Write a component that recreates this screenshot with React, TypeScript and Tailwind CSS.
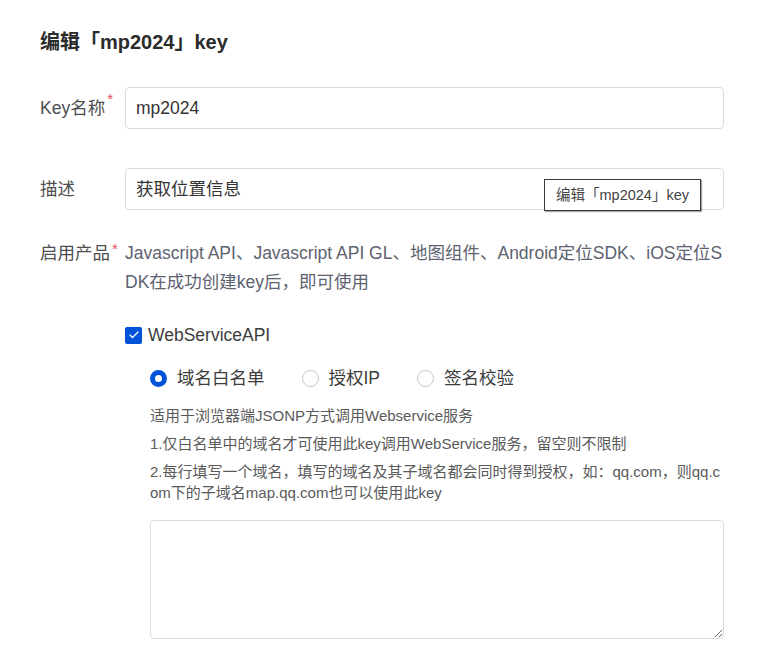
import { Check } from "lucide-react";

const font = { fontFamily: '"Liberation Sans", "Noto Sans CJK SC", sans-serif' };

function Star() {
  return <span className="ml-[2px] self-start text-[15px] leading-none text-[#e34d59] -mt-[4px]">*</span>;
}

function Radio({ checked, label }: { checked?: boolean; label: string }) {
  return (
    <label className="flex items-center gap-[10px]">
      {checked ? (
        <span className="h-[17px] w-[17px] rounded-full border-[5px] border-[#0052d9] bg-white" />
      ) : (
        <span className="h-[17px] w-[17px] rounded-full border border-[#c5c5c5] bg-white" />
      )}
      <span className="text-[17.5px] leading-6 text-[#3c3c3c]">{label}</span>
    </label>
  );
}

export default function App() {
  return (
    <div className="min-h-screen bg-white pl-[40px] pr-[41px] pt-[30px]" style={font}>
      <h2 className="text-[20px] font-bold leading-6 text-[#2b2b2b]">编辑「mp2024」key</h2>

      {/* Key名称 */}
      <div className="mt-[33px] flex items-center">
        <div className="flex w-[85px] items-center text-[17.5px] text-[#4e4e4e]">
          <span>Key名称</span>
          <Star />
        </div>
        <div className="flex h-[42px] flex-1 items-center rounded-[4px] border border-[#dcdcdc] px-[10px] text-[17.5px] text-[#333]">
          mp2024
        </div>
      </div>

      {/* 描述 */}
      <div className="relative mt-[39px] flex items-center">
        <div className="w-[85px] text-[17.5px] text-[#4e4e4e]">描述</div>
        <div className="flex h-[42px] flex-1 items-center rounded-[4px] border border-[#dcdcdc] px-[10px] text-[17.5px] text-[#333]">
          获取位置信息
        </div>
        <div className="absolute left-[504px] top-[11px] border border-[#3a3a3a] bg-white px-[11px] py-[5px] text-[14.5px] leading-5 text-[#444] shadow-[1px_1px_1px_rgba(0,0,0,0.35)]">
          编辑「mp2024」key
        </div>
      </div>

      {/* 启用产品 */}
      <div className="mt-[29px] flex items-start">
        <div className="flex w-[85px] items-center text-[17.5px] leading-[29px] text-[#4e4e4e]">
          <span>启用产品</span>
          <span className="ml-[2px] -mt-[10px] text-[15px] leading-none text-[#e34d59]">*</span>
        </div>
        <div className="flex-1">
          <p className="break-all text-[17.5px] leading-[29px] text-[#5d6270]">
            Javascript API、Javascript API GL、地图组件、Android定位SDK、iOS定位SDK在成功创建key后，即可使用
          </p>

          <div className="mt-[26px] flex h-6 items-center gap-[6px]">
            <span className="flex h-[17px] w-[17px] items-center justify-center rounded-[2px] bg-[#0052d9]">
              <Check className="h-[12px] w-[12px] text-white" strokeWidth={2.5} />
            </span>
            <span className="text-[17.5px] text-[#3c3c3c]">WebServiceAPI</span>
          </div>

          <div className="pl-[25px]">
            <div className="mt-[19px] flex items-center gap-[37px]">
              <Radio checked label="域名白名单" />
              <Radio label="授权IP" />
              <Radio label="签名校验" />
            </div>

            <div className="mt-[15px] break-all text-[15px] leading-[21px] text-[#5a5a5a]">
              <p>适用于浏览器端JSONP方式调用Webservice服务</p>
              <p className="mt-[7px]">1.仅白名单中的域名才可使用此key调用WebService服务，留空则不限制</p>
              <p className="mt-[7px]">
                2.每行填写一个域名，填写的域名及其子域名都会同时得到授权，如：qq.com，则qq.com下的子域名map.qq.com也可以使用此key
              </p>
            </div>

            <textarea className="mt-[17px] block h-[119px] w-full resize-y rounded-[4px] border border-[#dcdcdc] outline-none" />
          </div>
        </div>
      </div>
    </div>
  );
}
